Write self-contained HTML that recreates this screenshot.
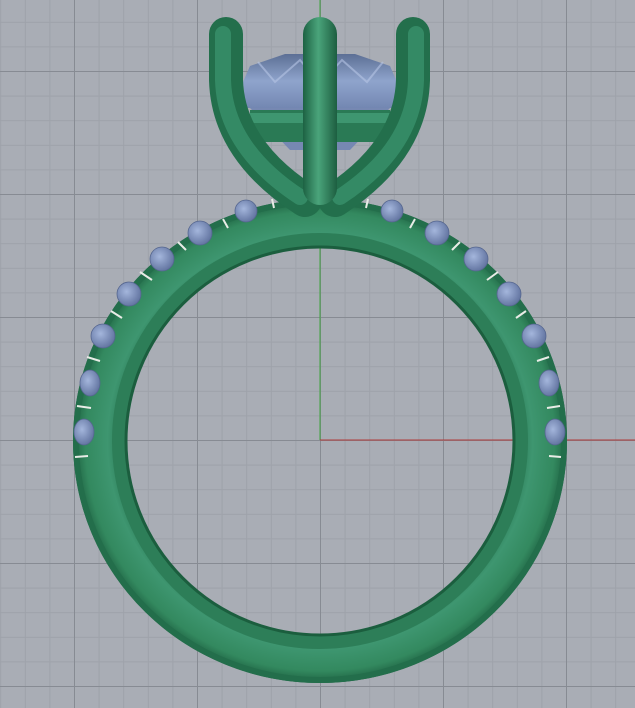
<!DOCTYPE html>
<html><head><style>
html,body{margin:0;padding:0;background:#a9adb5;}
svg{display:block}
</style></head><body>
<svg width="635" height="708" viewBox="0 0 635 708" xmlns="http://www.w3.org/2000/svg">
<defs>
<pattern id="minor" width="24.6" height="24.6" patternUnits="userSpaceOnUse" x="320" y="440">
<path d="M0 0.5H24.6M0.5 0V24.6" stroke="#9ea2aa" stroke-width="1" fill="none"/>
</pattern>
<pattern id="major" width="123" height="123" patternUnits="userSpaceOnUse" x="320" y="440">
<path d="M0 0.5H123M0.5 0V123" stroke="#878b93" stroke-width="1" fill="none"/>
</pattern>
<radialGradient id="band" cx="0.5" cy="0.5" r="0.5">
<stop offset="0.78" stop-color="#24704d"/>
<stop offset="0.86" stop-color="#3e9670"/>
<stop offset="0.95" stop-color="#33895f"/>
<stop offset="1" stop-color="#1f6343"/>
</radialGradient>
<linearGradient id="prong" x1="0" x2="1">
<stop offset="0" stop-color="#1d6243"/>
<stop offset="0.45" stop-color="#4aa47b"/>
<stop offset="1" stop-color="#1d5e40"/>
</linearGradient>
<linearGradient id="dia" x1="0" y1="0" x2="0" y2="1">
<stop offset="0" stop-color="#5c6f95"/>
<stop offset="0.5" stop-color="#8fa4cc"/>
<stop offset="1" stop-color="#7387b2"/>
</linearGradient>
<radialGradient id="stone" cx="0.4" cy="0.4" r="0.6">
<stop offset="0" stop-color="#a4b6dc"/>
<stop offset="1" stop-color="#6577a3"/>
</radialGradient>
</defs>
<rect width="635" height="708" fill="#a9adb5"/>
<rect width="635" height="708" fill="url(#minor)"/>
<rect width="635" height="708" fill="url(#major)"/>
<line x1="320" y1="0" x2="320" y2="440" stroke="#3fa33f" stroke-width="1"/>
<line x1="320" y1="440" x2="635" y2="440" stroke="#b03a3a" stroke-width="1"/>
<!-- diamond -->
<path d="M250 66 L285 54 L355 54 L390 66 L397 82 L394 108 L246 108 L243 82 Z" fill="url(#dia)"/>
<path d="M258 62L275 82L300 60L320 84L342 60L367 82L383 62" stroke="#b6c5e5" stroke-width="2" fill="none" opacity="0.6"/>
<path d="M250 108 L390 108 L350 150 L290 150 Z" fill="#7688b2"/>
<!-- ring band -->
<path fill-rule="evenodd" fill="url(#band)" d="M73 441 A247 242 0 1 0 567 441 A247 242 0 1 0 73 441 Z M127 441 A193 193 0 1 1 513 441 A193 193 0 1 1 127 441 Z"/>
<ellipse cx="320" cy="441" rx="201" ry="201" fill="none" stroke="#2d7e58" stroke-width="14"/>
<ellipse cx="320" cy="441" rx="194" ry="194" fill="none" stroke="#1b5e3e" stroke-width="3"/>
<ellipse cx="320" cy="441" rx="244" ry="239" fill="none" stroke="#236e4b" stroke-width="6"/>
<!-- stones -->
<g fill="url(#stone)" stroke="#55668f" stroke-width="0.8">
<ellipse cx="84" cy="432" rx="10" ry="13"/><ellipse cx="90" cy="383" rx="10" ry="13"/><circle cx="103" cy="336" r="12"/>
<circle cx="129" cy="294" r="12"/><circle cx="162" cy="259" r="12"/><circle cx="200" cy="233" r="12"/>
<circle cx="246" cy="211" r="11"/>
<circle cx="392" cy="211" r="11"/><circle cx="437" cy="233" r="12"/><circle cx="476" cy="259" r="12"/>
<circle cx="509" cy="294" r="12"/><circle cx="534" cy="336" r="12"/><ellipse cx="549" cy="383" rx="10" ry="13"/><ellipse cx="555" cy="432" rx="10" ry="13"/>
</g>
<g stroke="#e8ece6" stroke-width="2">
<line x1="75" y1="457" x2="88" y2="456"/><line x1="77" y1="406" x2="91" y2="408"/><line x1="87" y1="357" x2="100" y2="361"/>
<line x1="111" y1="311" x2="122" y2="318"/><line x1="140" y1="272" x2="152" y2="280"/><line x1="178" y1="242" x2="186" y2="250"/>
<line x1="223" y1="219" x2="228" y2="228"/><line x1="272" y1="199" x2="274" y2="208"/>
<line x1="368" y1="199" x2="366" y2="208"/><line x1="415" y1="219" x2="410" y2="228"/><line x1="460" y1="242" x2="452" y2="250"/>
<line x1="498" y1="272" x2="487" y2="280"/><line x1="526" y1="311" x2="516" y2="318"/><line x1="549" y1="357" x2="537" y2="361"/>
<line x1="560" y1="406" x2="547" y2="408"/><line x1="561" y1="457" x2="549" y2="456"/>
</g>
<!-- gallery bar -->
<rect x="250" y="110" width="140" height="32" fill="#2a7a55"/>
<rect x="250" y="113" width="140" height="10" fill="#3e9670"/>
<!-- prongs -->
<path d="M226 34 V80 Q228 150 305 200" stroke="#236f4c" stroke-width="34" fill="none" stroke-linecap="round"/>
<path d="M223 34 V80 Q225 148 300 197" stroke="#3c9570" stroke-width="16" fill="none" stroke-linecap="round" opacity="0.7"/>
<path d="M413 34 V80 Q411 150 335 200" stroke="#236f4c" stroke-width="34" fill="none" stroke-linecap="round"/>
<path d="M416 34 V80 Q414 148 340 197" stroke="#3c9570" stroke-width="16" fill="none" stroke-linecap="round" opacity="0.7"/>
<rect x="303" y="17" width="34" height="188" rx="17" fill="url(#prong)"/>
</svg>
</body></html>
